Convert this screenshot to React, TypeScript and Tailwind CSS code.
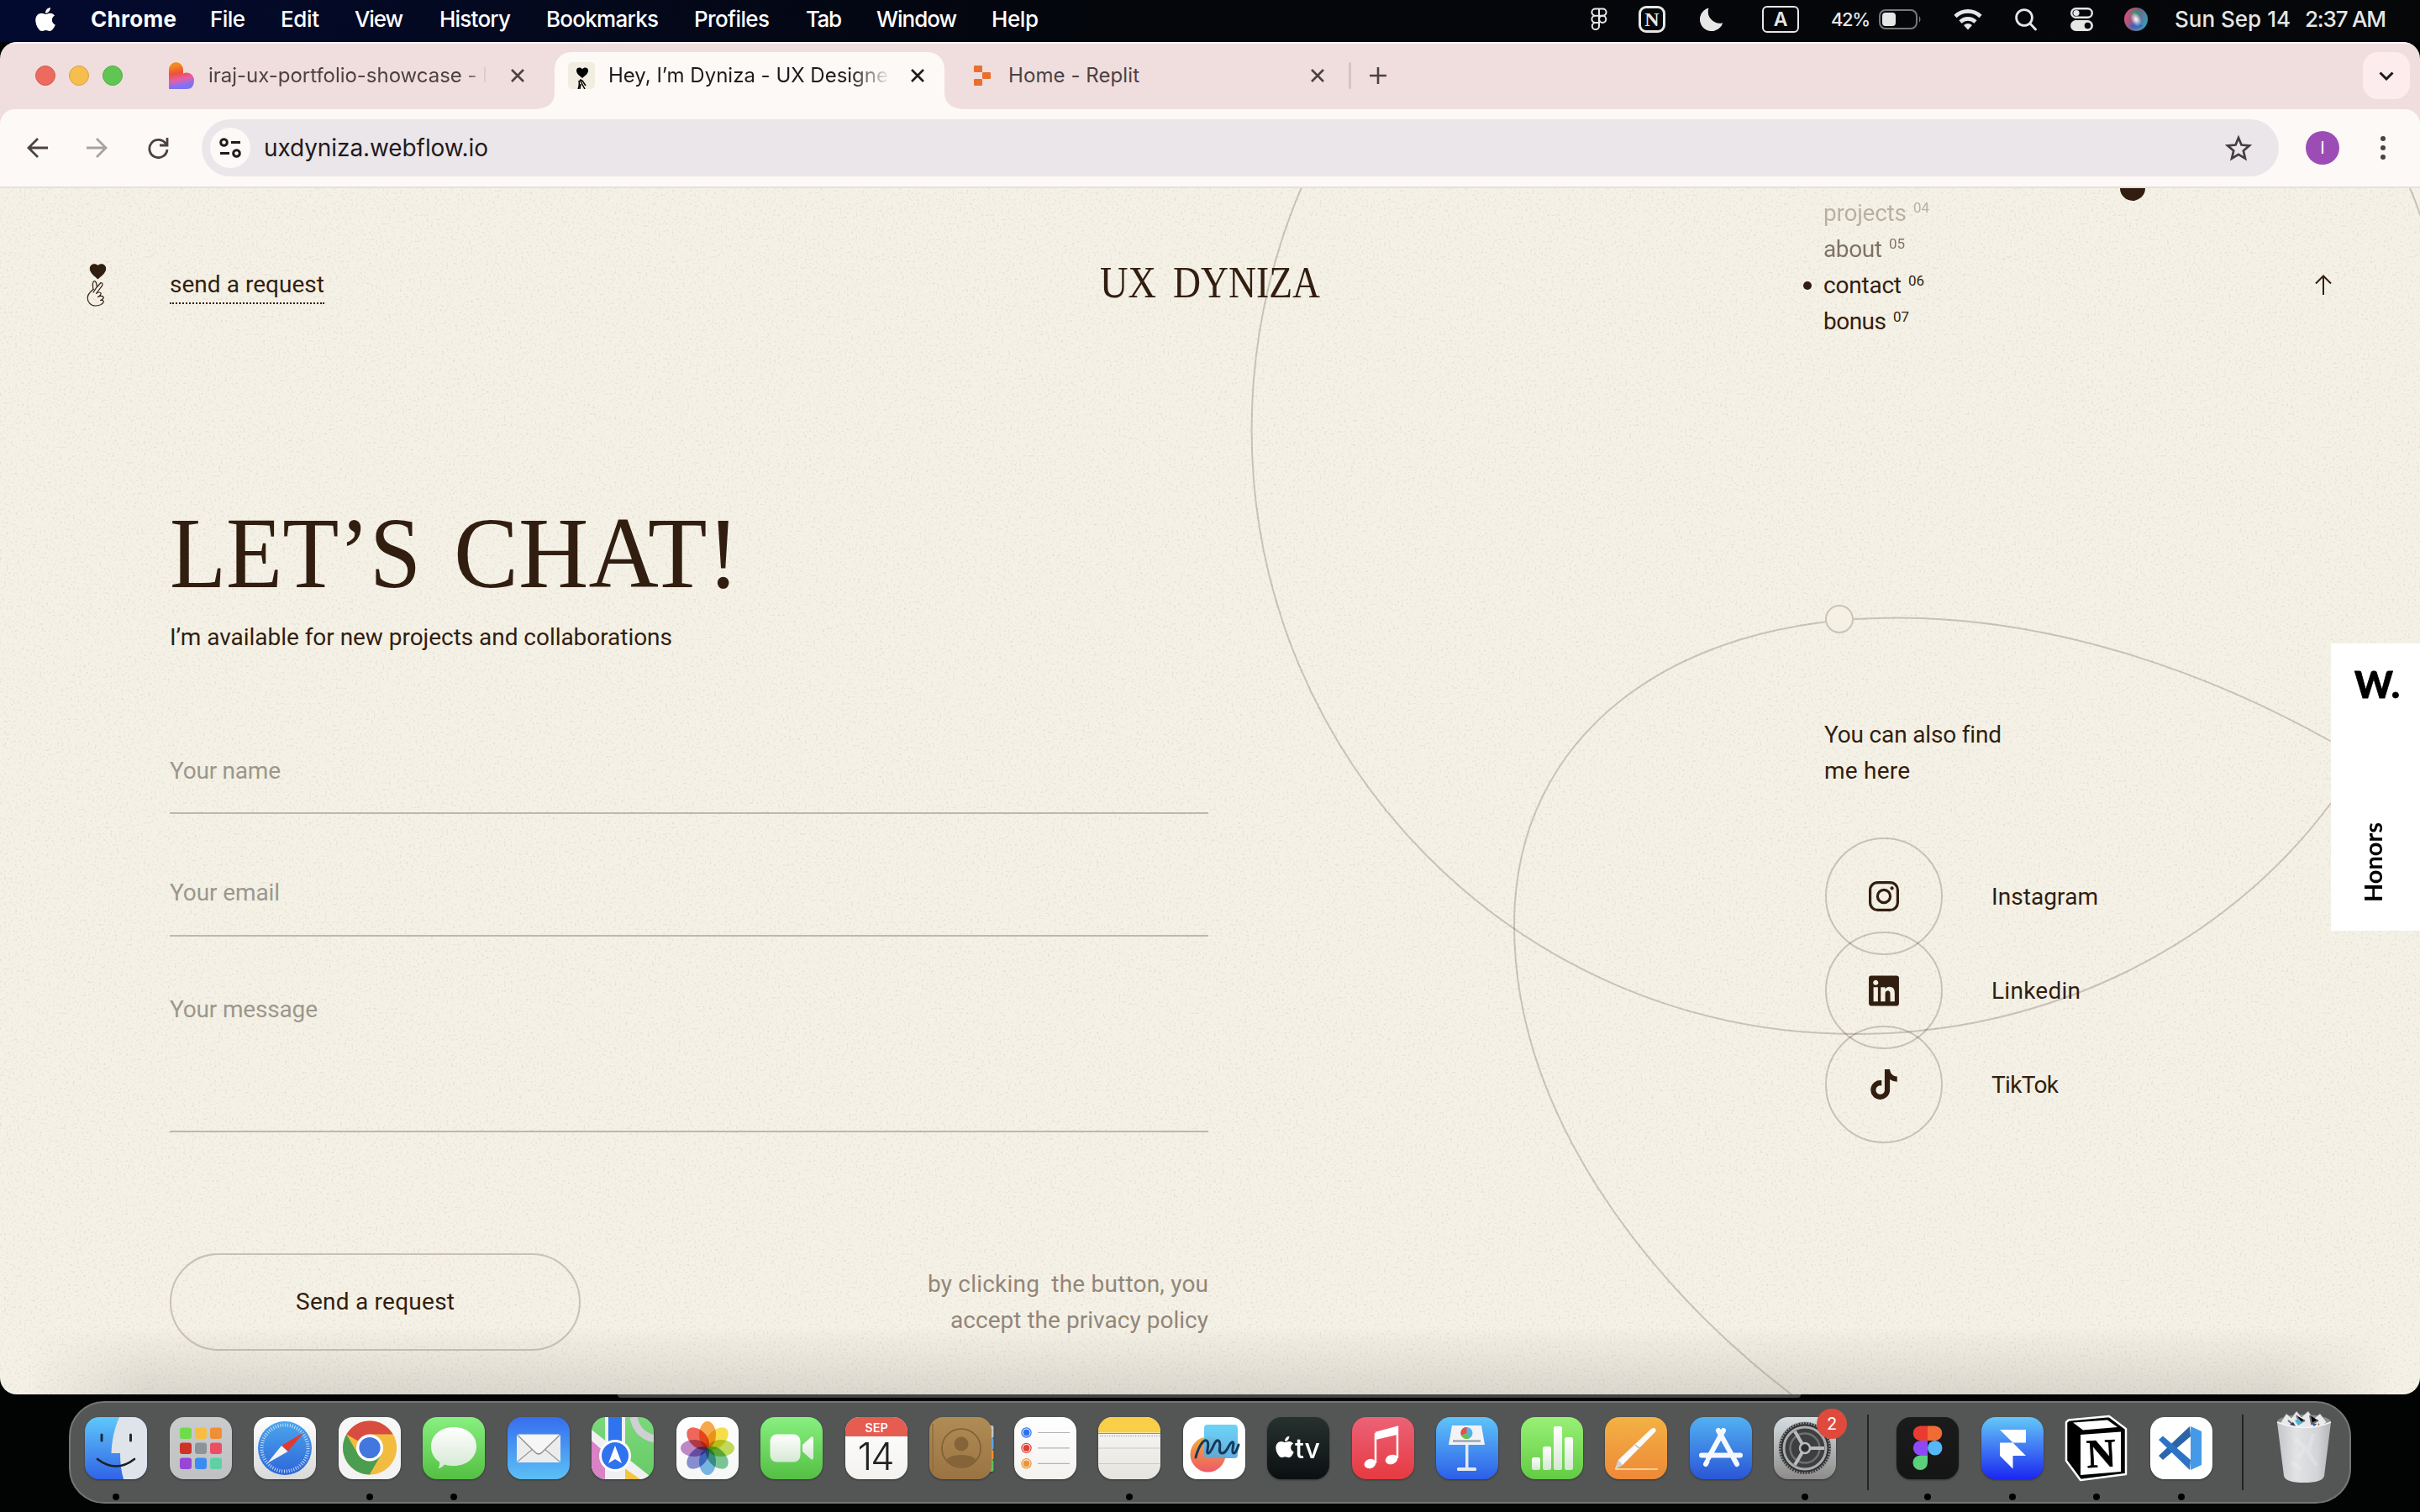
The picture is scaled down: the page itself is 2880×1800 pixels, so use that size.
import React, { useLayoutEffect, useRef, useState } from "react";
import { FaApple, FaLinkedin, FaTiktok } from "react-icons/fa";

type FitProps = { w: number; children: string; className?: string; squeeze?: boolean };

/** One line of text set to an exact measure, by tracking or by condensing. */
function Fit({ w, children, className = "", squeeze = false }: FitProps) {
  const ref = useRef<HTMLSpanElement>(null);
  const [natural, setNatural] = useState(0);
  useLayoutEffect(() => {
    if (ref.current) setNatural(ref.current.getBoundingClientRect().width);
  }, []);
  let style: React.CSSProperties = {};
  if (natural > 0) {
    style = squeeze
      ? { transform: `scaleX(${w / natural})` }
      : { letterSpacing: `${(w - natural) / Math.max(1, children.length - 1)}px` };
  }
  return (
    <span className={"block shrink-0 whitespace-pre " + className} style={{ width: w }}>
      <span ref={ref} className="inline-block origin-left whitespace-pre" style={style}>
        {children}
      </span>
    </span>
  );
}

/* ---------- Menu bar ---------- */

const menus = [
  { label: "File", w: 42, gap: "ml-[40px]" },
  { label: "Edit", w: 46, gap: "ml-[42px]" },
  { label: "View", w: 58, gap: "ml-[42px]" },
  { label: "History", w: 85, gap: "ml-[43px]" },
  { label: "Bookmarks", w: 134, gap: "ml-[42px]" },
  { label: "Profiles", w: 90, gap: "ml-[42px]" },
  { label: "Tab", w: 43, gap: "ml-[43px]" },
  { label: "Window", w: 96, gap: "ml-[41px]" },
  { label: "Help", w: 56, gap: "ml-[41px]" },
];

function MenuBar() {
  return (
    <div className="flex h-[50px] items-center bg-gradient-to-r from-[#030a30] via-[#04060c] via-45% to-[#050709] pb-[4px] text-[26px] leading-none font-medium text-white">
      <FaApple className="ml-[39px] h-[32px] w-[30px]" />
      <Fit w={102} className="ml-[39px] font-bold">Chrome</Fit>
      {menus.map((m) => (
        <Fit key={m.label} w={m.w} className={m.gap}>{m.label}</Fit>
      ))}
      <div className="ml-auto flex items-center text-[#e6e6e6]">
        <svg className="mr-[37px] h-[28px] w-[20px]" viewBox="0 0 20 28" fill="none" stroke="currentColor" strokeWidth="2">
          <path d="M10 1.5H5.5a4.1 4.1 0 0 0 0 8.2H10zM10 1.5h4.5a4.1 4.1 0 0 1 0 8.2H10zM10 9.700H5.500a4.100 4.100 0 0 0 0 8.200H10zM5.500 17.900a4.100 4.100 0 1 0 4.500 4.300V17.900z" />
          <circle cx="14.200" cy="13.800" r="4.100" />
        </svg>
        <div className="mr-[41px] flex h-[32px] w-[32px] items-center justify-center rounded-[9px] border-[3px] border-current font-['Liberation_Serif'] text-[24px] font-bold">N</div>
        <svg className="mr-[46px] h-[28px] w-[28px]" viewBox="0 0 28 28" fill="currentColor">
          <path d="M10.500 0.500A14 14 0 1 0 27.300 18.300A14 14 0 0 1 10.500 0.500z" />
        </svg>
        <div className="mr-[38px] flex h-[32px] w-[44px] items-center justify-center rounded-[6px] border-2 border-current text-[23px] font-semibold">A</div>
        <Fit w={47} className="mr-[10px] text-[22px]">42%</Fit>
        <svg className="mr-[38px] h-[24px] w-[51px]" viewBox="0 0 51 24" fill="none">
          <rect x="1" y="1" width="44" height="22" rx="7" stroke="#77787a" strokeWidth="2" />
          <rect x="4" y="4" width="16" height="16" rx="4" fill="#e6e6e6" />
          <path d="M48 8q3 4 0 8z" fill="#77787a" />
        </svg>
        <svg className="mr-[39px] h-[26px] w-[34px]" viewBox="0 0 34 26" fill="none" stroke="currentColor" strokeWidth="4.600">
          <path d="M2 9.500a21.500 21.500 0 0 1 30 0" />
          <path d="M8 16a13 13 0 0 1 18 0" />
          <path d="M17 25.500l-5-5.500a7.500 7.500 0 0 1 10 0z" fill="currentColor" stroke="none" />
        </svg>
        <svg className="mr-[40px] h-[27px] w-[26px]" viewBox="0 0 26 27" fill="none" stroke="currentColor" strokeWidth="2.800" strokeLinecap="round">
          <circle cx="11" cy="11" r="9.400" />
          <path d="M18 18l6.500 7" />
        </svg>
        <svg className="mr-[37px] h-[28px] w-[27px]" viewBox="0 0 27 28" fill="none">
          <rect x="1.200" y="1.200" width="24.600" height="10.600" rx="5.300" stroke="currentColor" strokeWidth="2.400" />
          <circle cx="7" cy="6.500" r="3.600" fill="currentColor" />
          <rect x="0" y="15" width="27" height="13" rx="6.500" fill="currentColor" />
          <circle cx="20.500" cy="21.500" r="3.800" fill="#07090b" />
        </svg>
        <svg className="mr-[32px] h-[28px] w-[28px]" viewBox="0 0 28 28">
          <defs>
            <linearGradient id="siri" x1="0" y1="0.300" x2="1" y2="0.700">
              <stop offset="0" stopColor="#e2506f" />
              <stop offset="0.450" stopColor="#7c5c8c" />
              <stop offset="1" stopColor="#2fa3b8" />
            </linearGradient>
            <radialGradient id="siriGlow">
              <stop offset="0" stopColor="#fff" />
              <stop offset="1" stopColor="#fff" stopOpacity="0" />
            </radialGradient>
          </defs>
          <circle cx="14" cy="14" r="14" fill="url(#siri)" />
          <path d="M6 6q8-6 16 0l-8 5z" fill="#3d8d6c" opacity="0.800" />
          <path d="M6 22q8 6 16 0l-7-6z" fill="#3567c8" opacity="0.900" />
          <ellipse cx="14" cy="14" rx="6" ry="9" fill="url(#siriGlow)" transform="rotate(-25 14 14)" />
        </svg>
        <Fit w={138} className="mr-[17px]">Sun Sep 14</Fit>
        <Fit w={97} className="mr-[40px]">2:37 AM</Fit>
      </div>
    </div>
  );
}

/* ---------- Browser chrome ---------- */

function Close({ className = "" }: { className?: string }) {
  return (
    <svg className={"h-[16px] w-[16px] shrink-0 " + className} viewBox="0 0 16 16" fill="none" stroke="currentColor" strokeWidth="2.600">
      <path d="M1 1l14 14M15 1L1 15" />
    </svg>
  );
}

function HandHeart({ className = "" }: { className?: string }) {
  return (
    <svg className={className} viewBox="0 0 24 52" fill="none" stroke="#321e10" strokeWidth="1.200" strokeLinecap="round" strokeLinejoin="round">
      <path d="M13.500 19.500C10 16 3.800 12.500 3.800 6.500C3.800 1.500 10 -0.500 13.500 2.800C17 -0.500 23.200 1.500 23.200 6.500C23.200 12.500 17 16 13.500 19.500z" fill="#321e10" stroke="none" />
      <path d="M8 31.500C7.200 27 7 23 8.800 21.800C11 21.200 11.800 24 12.200 27.500" />
      <path d="M8 35C10.500 30.500 14 26.500 17 23.500C19.500 23.500 19.500 26 18 27.800L11.500 36.500C14 34.500 16.500 34.500 17.300 36.500C17 38.500 15.500 39.500 13.500 40.500C16.500 39 19.500 39 20.300 41.200C20 43 18.500 44 16.500 44.500C18.500 44 20.300 44.500 20.300 46.500C18.500 49.800 14.500 51 10.500 51C4.500 51 1.200 46.500 1.200 41.500C1.200 37 4.500 34.500 8 31.500" />
    </svg>
  );
}

function TabStrip() {
  return (
    <div className="flex h-[80px] border-t-2 border-[#faf3f3] bg-[#f0dede] text-[24px] leading-none text-[#4c4143]">
      <div className="flex w-[634px] items-center pb-[2px] pl-[42px]">
        <div className="flex gap-4">
          <div className="h-6 w-6 rounded-full border border-[#d8574c] bg-[#ed6a5f]" />
          <div className="h-6 w-6 rounded-full border border-[#dca23a] bg-[#f5bf4f]" />
          <div className="h-6 w-6 rounded-full border border-[#50ae3f] bg-[#61c554]" />
        </div>
        <svg className="ml-[55px] h-[32px] w-[30px]" viewBox="0 0 30 32">
          <defs>
            <linearGradient id="lov" x1="0.300" y1="0" x2="0.500" y2="1">
              <stop offset="0.100" stopColor="#f28b1e" />
              <stop offset="0.400" stopColor="#f0503c" />
              <stop offset="0.650" stopColor="#e25fae" />
              <stop offset="0.900" stopColor="#7a73f5" />
            </linearGradient>
          </defs>
          <path d="M0 9a8.500 9 0 0 1 17 0v4.500a9 9 0 0 1 13 8.500q0 10-9 10H0z" fill="url(#lov)" />
        </svg>
        <div className="ml-[17px] w-[332px] overflow-hidden py-2 [mask-image:linear-gradient(90deg,#000_92%,transparent_100%)]">
          <Fit w={332}>iraj-ux-portfolio-showcase - l</Fit>
        </div>
        <Close className="ml-[28px]" />
      </div>
      <div className="flex items-end">
        <svg className="h-[20px] w-[26px]" viewBox="0 0 26 20"><path d="M0 20Q26 20 26 0V20z" fill="#fdf9f6" /></svg>
      </div>
      <div className="mt-[10px] flex w-[464px] items-center rounded-t-[20px] bg-[#fdf9f6] pb-[12px] text-[#1f1a1c]">
        <div className="ml-[16px] flex h-[32px] w-[32px] justify-center rounded-[5px] bg-[#f1ede0] pt-[6px]">
          <svg className="h-[26px] w-[20px]" viewBox="0 0 20 26">
            <path d="M11 13C6 9 4 7 4 4c0-4 5-4.500 7-1.500C13-.5 18 0 18 4c0 3-2 5-7 9z" fill="#000" />
            <path d="M6 26q2-4 1-10M8 15l6 11M9 20l-1 6M8 15q3 0 5 4l2 3" fill="none" stroke="#000" strokeWidth="1.500" />
          </svg>
        </div>
        <div className="ml-[16px] w-[336px] overflow-hidden py-2 [mask-image:linear-gradient(90deg,#000_86%,transparent_100%)]">
          <Fit w={333}>Hey, I’m Dyniza - UX Designe</Fit>
        </div>
        <Close className="ml-[24px]" />
      </div>
      <div className="flex items-end">
        <svg className="h-[20px] w-[26px]" viewBox="0 0 26 20"><path d="M26 20Q0 20 0 0V20z" fill="#fdf9f6" /></svg>
      </div>
      <div className="flex flex-1 items-center pb-[2px]">
        <svg className="ml-[9px] h-[24px] w-[20px]" viewBox="0 0 20 24" fill="#e8702f">
          <rect x="0" y="0" width="10" height="8" rx="1" />
          <rect x="10" y="8" width="10" height="8" rx="1" />
          <rect x="0" y="16" width="10" height="8" rx="1" />
        </svg>
        <Fit w={156} className="ml-[21px]">Home - Replit</Fit>
        <Close className="ml-[204px]" />
        <div className="ml-[29px] h-[32px] w-[3px] rounded bg-[#d8c3c5]" />
        <svg className="ml-[22px] h-[20px] w-[20px]" viewBox="0 0 20 20" stroke="currentColor" strokeWidth="2.600"><path d="M10 0v20M0 10h20" /></svg>
        <div className="mr-[12px] ml-auto flex h-[56px] w-[56px] items-center justify-center rounded-[18px] bg-[#fcecee]">
          <svg className="h-[11px] w-[18px]" viewBox="0 0 18 11" fill="none" stroke="#1f1a1c" strokeWidth="3"><path d="M1.500 1.500L9 9l7.500-7.500" /></svg>
        </div>
      </div>
    </div>
  );
}

function Toolbar() {
  return (
    <div className="bg-[#f0dede]">
      <div className="flex h-[94px] items-center rounded-t-[18px] border-b-2 border-[#e4e0e3] bg-[#fdf9f6] text-[#4c4143]">
        <svg className="ml-[32px] h-[24px] w-[25px]" viewBox="0 0 25 24" fill="none" stroke="currentColor" strokeWidth="2.800"><path d="M25 12H2M13 1L2 12l11 11" /></svg>
        <svg className="ml-[46px] h-[24px] w-[25px] text-[#aaa1a1]" viewBox="0 0 25 24" fill="none" stroke="currentColor" strokeWidth="2.800"><path d="M0 12h23M12 1l11 11-11 11" /></svg>
        <svg className="ml-[47px] h-[26px] w-[26px]" viewBox="0 0 26 26" fill="none" stroke="currentColor" strokeWidth="2.800"><path d="M22.500 8.500A10.600 10.600 0 1 0 24 15M24 1v9h-9" /></svg>
        <div className="ml-[39px] flex h-[68px] w-[2472px] items-center rounded-full bg-[#ebe6ea] text-[#1f1a1c]">
          <div className="ml-[10px] flex h-[48px] w-[48px] items-center justify-center rounded-full bg-[#fdf9f6]">
            <svg className="h-[24px] w-[26px]" viewBox="0 0 26 24" fill="none" stroke="currentColor" strokeWidth="3">
              <circle cx="5.500" cy="5.500" r="3.800" /><path d="M14 5.500h11M1 18.500h11" /><circle cx="20.500" cy="18.500" r="3.800" />
            </svg>
          </div>
          <Fit w={267} className="ml-[16px] text-[28px] leading-none">uxdyniza.webflow.io</Fit>
          <svg className="mr-[32px] ml-auto h-[32px] w-[32px] text-[#453d40]" viewBox="0 0 32 32" fill="none" stroke="currentColor" strokeWidth="2.700"><path d="M16 4l3.500 8.500 9.500.8-7.200 6.200 2.200 9.200L16 23.800l-8 4.900 2.200-9.200L3 13.300l9.500-.8z" /></svg>
        </div>
        <div className="ml-[32px] flex h-[40px] w-[40px] items-center justify-center rounded-full bg-[#9b4db5] text-[20px] leading-none text-white">I</div>
        <div className="ml-[49px] flex flex-col gap-[5px]">
          <div className="h-[6px] w-[6px] rounded-full bg-[#4c4143]" />
          <div className="h-[6px] w-[6px] rounded-full bg-[#4c4143]" />
          <div className="h-[6px] w-[6px] rounded-full bg-[#4c4143]" />
        </div>
      </div>
    </div>
  );
}

/* ---------- Page ---------- */

const nav = [
  { label: "projects", num: "04", w: 99, tone: "opacity-30" },
  { label: "about", num: "05", w: 70, tone: "opacity-60" },
  { label: "contact", num: "06", w: 93, tone: "" },
  { label: "bonus", num: "07", w: 75, tone: "" },
];

function Backdrop() {
  return (
    <svg className="absolute inset-0 h-[1436px] w-[2880px]" viewBox="0 224 2880 1436" fill="none">
      <filter id="grain" x="0" y="0" width="100%" height="100%" colorInterpolationFilters="sRGB">
        <feTurbulence type="fractalNoise" baseFrequency="0.380" numOctaves="2" seed="4" />
        <feColorMatrix values="0 0 0 0 0.840  0 0 0 0 0.850  0 0 0 0 0.790  2.200 0 0 0 -1.180" />
      </filter>
      <rect x="0" y="224" width="2880" height="1436" filter="url(#grain)" />
      <g stroke="#321e10" strokeOpacity="0.220" strokeWidth="2">
        <path d="M1548.500 224C1510 315 1489.600 410 1489.600 511.500C1489.600 909.700 1811 1231 2207 1231C2440 1231 2650 1124 2774 956" />
        <path d="M2868 224Q2875 240 2881 258" />
        <path d="M2774 882.500C2600 785 2420 735.500 2257 735.500C1990 735.500 1802 875 1802 1101C1802 1325 1960 1530 2137 1664" />
        <circle cx="2189" cy="737" r="16" fill="#f4f0e4" stroke="#cac3b8" strokeOpacity="1" />
      </g>
      <circle cx="2538" cy="224" r="15" fill="#321e10" />
    </svg>
  );
}

function SiteHeader() {
  return (
    <header className="flex h-[230px] items-center">
      <HandHeart className="ml-[103px] h-[52px] w-[24px]" />
      <div className="ml-[75px] border-b-2 border-dotted border-[#321e10] pt-[9px] pb-[8px]">
        <Fit w={184} className="leading-[26px]">send a request</Fit>
      </div>
      <div className="ml-[923px] flex pb-[5px] font-['Liberation_Serif'] text-[53px] leading-none">
        <Fit w={67} squeeze>UX</Fit>
        <Fit w={175} squeeze className="ml-[20px]">DYNIZA</Fit>
      </div>
      <nav className="-mt-[41px] ml-[575px] flex w-[200px] flex-col">
        {nav.map((n) => (
          <div key={n.label} className={"flex h-[43.2px] items-center " + n.tone}>
            <div className={"mr-[14px] h-[10px] w-[10px] rounded-full " + (n.label === "contact" ? "bg-[#321e10]" : "")} />
            <Fit w={n.w} className="leading-none">{n.label}</Fit>
            <Fit w={19} className="mb-[12px] ml-[8px] text-[17px] leading-none">{n.num}</Fit>
          </div>
        ))}
      </nav>
      <svg className="ml-[409px] h-[24px] w-[20px]" viewBox="0 0 20 24" fill="none" stroke="#321e10" strokeWidth="2"><path d="M10 24V2M1 10.500L10 1.500l9 9" /></svg>
    </header>
  );
}

function ContactForm() {
  return (
    <section className="flex w-[1236px] flex-col">
      <h1 className="mt-[145px] flex h-[119px] font-['Liberation_Serif'] text-[120px] leading-[119px]">
        <Fit w={299} squeeze>LET’S</Fit>
        <Fit w={340} squeeze className="ml-[39px]">CHAT!</Fit>
      </h1>
      <Fit w={598} className="mt-[27px] leading-[28px]">I’m available for new projects and collaborations</Fit>
      <div className="mt-[96px] flex h-[100px] items-center border-b-2 border-[#bdb8ae] text-[#9c978c]">
        <Fit w={132}>Your name</Fit>
      </div>
      <div className="mt-[44px] flex h-[102px] items-center border-b-2 border-[#bdb8ae] text-[#9c978c]">
        <Fit w={131}>Your email</Fit>
      </div>
      <div className="flex h-[233px] border-b-2 border-[#bdb8ae] pt-[73px] text-[#9c978c]">
        <Fit w={176}>Your message</Fit>
      </div>
      <div className="mt-[144px] flex items-center justify-between">
        <div className="flex h-[116px] w-[489px] items-center justify-center rounded-full border-2 border-[#cac1b6]">
          <Fit w={189}>Send a request</Fit>
        </div>
        <div className="flex flex-col items-end leading-[43px] text-[#92867b]">
          <Fit w={334}>by clicking  the button, you</Fit>
          <Fit w={307}>accept the privacy policy</Fit>
        </div>
      </div>
    </section>
  );
}

function SocialRow({ label, w, children }: { label: string; w: number; children: React.ReactNode }) {
  return (
    <div className="-mb-[28px] flex items-center">
      <div className="flex h-[140px] w-[140px] items-center justify-center rounded-full border-2 border-[#321e10]/22">{children}</div>
      <Fit w={w} className="ml-[58px] pt-[2px] leading-none">{label}</Fit>
    </div>
  );
}

function FindMe() {
  return (
    <section className="ml-[733px] flex w-[420px] flex-col pt-[399px]">
      <Fit w={210} className="leading-[43px]">You can also find</Fit>
      <Fit w={102} className="leading-[43px]">me here</Fit>
      <div className="mt-[58px] ml-[1px] flex flex-col">
        <SocialRow label="Instagram" w={127}>
          <svg className="h-[36px] w-[36px]" viewBox="0 0 36 36" fill="none" stroke="#321e10" strokeWidth="3.200">
            <rect x="1.600" y="1.600" width="32.800" height="32.800" rx="9" />
            <circle cx="18" cy="18" r="7.600" />
            <circle cx="27.600" cy="8.400" r="2.100" fill="#321e10" stroke="none" />
          </svg>
        </SocialRow>
        <SocialRow label="Linkedin" w={106}><FaLinkedin className="h-[41px] w-[36px]" /></SocialRow>
        <SocialRow label="TikTok" w={80}><FaTiktok className="h-[36px] w-[32px]" /></SocialRow>
      </div>
    </section>
  );
}

function Honors() {
  return (
    <aside className="absolute top-[542px] right-0 flex h-[342px] w-[106px] flex-col items-center justify-between bg-white pt-[25px] pb-[34px] text-black">
      <Fit w={54} squeeze className="ml-1 font-[Lato] text-[43px] leading-[48px] font-black [-webkit-text-stroke:0.8px_#000]">W.</Fit>
      <span className="mr-[7px] rotate-180 font-[Lato] text-[29px] leading-[32px] font-bold [writing-mode:vertical-rl]">Honors</span>
    </aside>
  );
}

function Site() {
  return (
    <main className="relative h-[1436px] overflow-hidden bg-[#f5f1e6] font-[Roboto] text-[28px] leading-none text-[#321e10]">
      <Backdrop />
      <div className="relative">
        <SiteHeader />
        <div className="flex pl-[202px]">
          <ContactForm />
          <FindMe />
        </div>
      </div>
      <Honors />
      <div className="absolute bottom-0 left-0 h-[80px] w-full bg-gradient-to-b from-transparent to-[#8c8884]/25 [mask-image:linear-gradient(90deg,transparent_1%,#000_6%,#000_94%,transparent_99%)]" />
    </main>
  );
}

/* ---------- Dock ---------- */

function G({ id, a, b }: { id: string; a: string; b: string }) {
  return (
    <linearGradient id={id} x1="0" y1="0" x2="0" y2="1">
      <stop offset="0" stopColor={a} />
      <stop offset="1" stopColor={b} />
    </linearGradient>
  );
}

function Tile({ id, a, b, children }: { id: string; a: string; b: string; children?: React.ReactNode }) {
  return (
    <svg className="h-[74px] w-[74px] overflow-visible drop-shadow-[0_1px_1px_rgba(0,0,0,0.4)]" viewBox="0 0 74 74">
      <defs>
        <G id={id} a={a} b={b} />
        <clipPath id={id + "c"}><rect width="74" height="74" rx="17" /></clipPath>
        <G id={id + "w"} a="#ffffff" b="#d5e8d3" />
      </defs>
      <rect width="74" height="74" rx="17" fill={`url(#${id})`} />
      <g clipPath={`url(#${id}c)`}>{children}</g>
    </svg>
  );
}

const pads = ["#6fdc4c", "#f7bd3f", "#ee8f35", "#cf3226", "#8d9499", "#ee4e63", "#9646d8", "#3b8cf2", "#5fcfa6"];
const petals = ["#f5a13c", "#f5dc3a", "#bcd64a", "#6cc08a", "#6aaee0", "#7d84cc", "#b77fc0", "#ee5a4c"];
const degs = [0, 45, 90, 135, 180, 225, 270, 315];

const dockApps: { name: string; open?: boolean; badge?: string; art: React.ReactNode }[] = [
  { name: "Finder", open: true, art: (
    <Tile id="finder" a="#5ec8fa" b="#3163e6">
      <path d="M41 0C35 14 32 28 31.500 43H42C42 54 43 64 46 74H74V0z" fill="#dfe3ea" />
      <path d="M20 21v7M54.500 21v7" stroke="#1c2a3a" strokeWidth="3" strokeLinecap="round" />
      <path d="M15 50Q37 67 59 50" fill="none" stroke="#1c2028" strokeWidth="2.600" strokeLinecap="round" />
    </Tile>) },
  { name: "Launchpad", art: (
    <Tile id="launch" a="#cacbcc" b="#bfc1c3">
      {pads.map((c, i) => <rect key={c} x={12 + (i % 3) * 18} y={12.500 + Math.floor(i / 3) * 18} width="14" height="13.500" rx="3" fill={c} />)}
    </Tile>) },
  { name: "Safari", art: (
    <Tile id="safari" a="#ffffff" b="#d9d9d9">
      <defs><G id="safariB" a="#4aa6ee" b="#2e66d8" /></defs>
      <circle cx="37" cy="37" r="32" fill="url(#safariB)" />
      <circle cx="37" cy="37" r="27.500" fill="none" stroke="#d6e8fa" strokeWidth="4" strokeDasharray="0.900 1.980" />
      <path d="M60 18L40.500 41L33 34z" fill="#e3382f" />
      <path d="M16 55L33 34L40.500 41z" fill="#f4f4f4" />
    </Tile>) },
  { name: "Chrome", open: true, art: (
    <Tile id="chrome" a="#f7f7f7" b="#f2f2f2">
      <circle cx="37" cy="36.500" r="32" fill="#f2bc41" />
      <path d="M37 36.500L9.300 20.500A32 32 0 0 1 64.700 20.500z" fill="#d84d3f" />
      <path d="M9.300 20.500A32 32 0 0 0 37 68.500L52 43L37 50.500L23 44z" fill="#4b9e4f" />
      <path d="M37 20.500H64.700A32 32 0 0 1 37 68.500L51 44z" fill="#f2bc41" />
      <circle cx="37" cy="36.500" r="16" fill="#fff" />
      <circle cx="37" cy="36.500" r="12.600" fill="#4277de" />
    </Tile>) },
  { name: "Messages", open: true, art: (
    <Tile id="msg" a="#87f080" b="#54bf43">
      <path d="M37 12C53 12 64 22 64 35S53 58 37 58C33 58 29 57.500 26 56.500C24 59 21 61 18.500 61C20 58.500 20.500 56 20 53.500C13.500 49.500 10 42.500 10 35C10 22 21 12 37 12z" fill="url(#msgw)" />
    </Tile>) },
  { name: "Mail", art: (
    <Tile id="mail" a="#376eee" b="#5cc0f7">
      <rect x="11" y="20.500" width="52" height="33.500" rx="2.500" fill="#ececec" />
      <path d="M12 53L30 38M62 53L44 38" stroke="#9a9a9a" strokeWidth="1.200" />
      <path d="M12 21.500L33 42Q37 46 41 42L62 21.500" fill="#f6f6f6" stroke="#8e8e8e" strokeWidth="1.300" />
    </Tile>) },
  { name: "Maps", art: (
    <Tile id="maps" a="#7bd77b" b="#67cb66">
      <path d="M0 15L74 74H0z" fill="#f0f0f3" />
      <path d="M0 28L18 44V74H0z" fill="#d982c5" />
      <path d="M38 60L58 74H38z" fill="#f2c73e" />
      <path d="M50 0Q54 22 76 26" fill="none" stroke="#cfcfd4" strokeWidth="9" />
      <rect x="16" width="24" height="74" fill="#f0f0f3" />
      <rect x="20" width="16" height="42" fill="#2f73ee" />
      <circle cx="28" cy="46" r="19" fill="#fff" />
      <circle cx="28" cy="46" r="16" fill="#2f73ee" />
      <path d="M28 34L36 55L28 50L20 55z" fill="#fff" />
    </Tile>) },
  { name: "Photos", art: (
    <Tile id="photos" a="#ffffff" b="#f6f6f6">
      {degs.map((d, i) => <ellipse key={d} cx="37" cy="21" rx="10" ry="16" fill={petals[i]} opacity="0.920" className="mix-blend-multiply" transform={`rotate(${d} 37 37)`} />)}
    </Tile>) },
  { name: "FaceTime", art: (
    <Tile id="face" a="#87f080" b="#54bf43">
      <rect x="11.500" y="20.500" width="36" height="33" rx="8" fill="url(#facew)" />
      <path d="M50 33L60 24Q63 22 63 26V48Q63 52 60 50L50 41z" fill="url(#facew)" />
    </Tile>) },
  { name: "Calendar", art: (
    <Tile id="cal" a="#ffffff" b="#f3f2ef">
      <rect width="74" height="23" fill="#e55d50" />
      <text x="37" y="17.500" textAnchor="middle" fontSize="14.500" fontWeight="600" fill="#fff" fontFamily="Inter, sans-serif">SEP</text>
      <text x="35.500" y="62.500" textAnchor="middle" fontSize="45" fontWeight="300" letterSpacing="-2" fill="#222" fontFamily="Inter, sans-serif">14</text>
    </Tile>) },
  { name: "Contacts", art: (
    <svg className="h-[74px] w-[74px] overflow-visible drop-shadow-[0_1px_1px_rgba(0,0,0,0.4)]" viewBox="0 0 74 74">
      <defs><G id="cont" a="#b08c55" b="#9a7343" /></defs>
      <rect x="66" y="10" width="10.500" height="15" rx="2" fill="#c4c4c4" /><rect x="66" y="25" width="10.500" height="14" rx="2" fill="#5aa7e8" /><rect x="66" y="39" width="10.500" height="12" rx="2" fill="#ef8f2e" /><rect x="66" y="51" width="10.500" height="14" rx="2" fill="#5bc25b" />
      <rect width="74" height="74" rx="16" fill="url(#cont)" />
      <path d="M4 8V66" stroke="#8f6c3d" strokeWidth="1.500" />
      <circle cx="38" cy="37" r="23" fill="none" stroke="#7f5f33" strokeWidth="1.600" />
      <circle cx="38" cy="32" r="8.500" fill="#856439" />
      <path d="M20 51Q25 45 38 45T56 51Q49 60 38 60T20 51z" fill="#856439" />
    </svg>) },
  { name: "Reminders", art: (
    <Tile id="rem" a="#ffffff" b="#f3f2ef">
      {["#2f72ee", "#e03f35", "#ee9334"].map((c, i) => (
        <g key={c}>
          <circle cx="14.500" cy={18.500 + i * 18.400} r="5.600" fill="none" stroke={c} strokeWidth="1.200" />
          <circle cx="14.500" cy={18.500 + i * 18.400} r="3.900" fill={c} />
          <path d={`M28 ${18.500 + i * 18.400}H66`} stroke="#b4b4b8" strokeWidth="1.200" />
        </g>
      ))}
    </Tile>) },
  { name: "Notes", open: true, art: (
    <Tile id="notes" a="#f9f9f9" b="#e6e4de">
      <rect width="74" height="18.500" fill="#f8cf46" />
      <path d="M0 19.500H74" stroke="#97907c" strokeWidth="1.200" />
      <path d="M2 22.500H74" stroke="#aaa" strokeWidth="1.500" strokeDasharray="1.200 1.600" />
      <path d="M0 37H74M0 55.500H74" stroke="#cbcac8" strokeWidth="1.200" />
    </Tile>) },
  { name: "Freeform", art: (
    <Tile id="free" a="#ffffff" b="#ffffff">
      <defs><G id="freeA" a="#f2ad38" b="#ee5a66" /><G id="freeB" a="#5fd0f5" b="#5aa9e0" /></defs>
      <circle cx="29.500" cy="44.500" r="21" fill="url(#freeA)" />
      <rect x="25" y="9" width="40" height="40" rx="4" fill="url(#freeB)" opacity="0.930" />
      <path d="M15 48C18 36 24 26 28 28C33 31 26 43 30 43C35 42 37 26 42 28C47 31 40 42 46 43C52 44 54 32 58 30C63 28 56 42 60 43C63 43 64 39 66 33" fill="none" stroke="#143a5e" strokeWidth="3" strokeLinecap="round" />
    </Tile>) },
  { name: "TV", art: (
    <Tile id="tv" a="#27322f" b="#0b0f11">
      <g transform="translate(6.500 21)"><FaApple size={29} color="#fff" /></g>
      <text x="33" y="48.500" fontSize="32" fontWeight="500" fill="#fff" textLength="30" lengthAdjust="spacingAndGlyphs" fontFamily="Inter, sans-serif">tv</text>
    </Tile>) },
  { name: "Music", art: (
    <Tile id="music" a="#ec6277" b="#e63a41">
      <path d="M28 19L54 12V49M28 19V55M28 25L54 18.500" fill="none" stroke="#fff" strokeWidth="2.500" />
      <path d="M28 18L54 12V21L28 27z" fill="#fff" />
      <ellipse cx="21.500" cy="55.500" rx="7" ry="5.500" fill="#fff" transform="rotate(-20 21.500 55.500)" />
      <ellipse cx="47" cy="50.500" rx="7.500" ry="5.500" fill="#fff" transform="rotate(-20 47 50.500)" />
    </Tile>) },
  { name: "Keynote", art: (
    <Tile id="key" a="#5fc4f9" b="#2c5fe8">
      <path d="M19 10H54L58 33H15z" fill="#f1f3f6" />
      <path d="M20 28.500H53" stroke="#9ba7b6" strokeWidth="2.500" />
      <rect x="35" y="33" width="3.500" height="29" fill="#e4e8ee" />
      <rect x="25" y="60" width="23" height="4" rx="1.500" fill="#e4e8ee" />
      <circle cx="36.500" cy="19" r="7" fill="#4fb5e8" />
      <path d="M36.500 19V12A7 7 0 0 0 30 22z" fill="#e94f4a" /><path d="M36.500 19L30 22A7 7 0 0 0 40 25z" fill="#6cc24a" />
    </Tile>) },
  { name: "Numbers", art: (
    <Tile id="num" a="#98f076" b="#63cb43">
      <rect x="13" y="48" width="10" height="15" rx="2.500" fill="url(#numw)" /><rect x="26" y="35" width="10" height="28" rx="2.500" fill="url(#numw)" />
      <rect x="39" y="11" width="10" height="52" rx="2.500" fill="url(#numw)" /><rect x="52" y="24" width="10" height="39" rx="2.500" fill="url(#numw)" />
    </Tile>) },
  { name: "Pages", art: (
    <Tile id="pages" a="#f3b243" b="#ee8838">
      <path d="M13 62H62" stroke="#f9cf95" strokeWidth="2.200" strokeLinecap="round" />
      <path d="M12 62L16 51L55 14Q61 11 60.500 17L21 57z" fill="#fafafa" />
      <path d="M12 62L16 51L21 57z" fill="#d0d0d0" /><path d="M36 33L42 38" stroke="#b8b8b8" strokeWidth="1.500" />
    </Tile>) },
  { name: "App Store", art: (
    <Tile id="store" a="#52b1f2" b="#2a56d6">
      <g stroke="#f4f8fd" strokeWidth="6" strokeLinecap="round"><path d="M34 16L56 56M40 16L22 49M19 56L20.500 53" /><path d="M14 45.500H60" /></g>
    </Tile>) },
  { name: "Settings", open: true, badge: "2", art: (
    <Tile id="set" a="#d5dde2" b="#8e8c8a">
      <circle cx="37" cy="37" r="31" fill="#303234" /><circle cx="37" cy="37" r="30" fill="none" stroke="#8f9193" strokeWidth="3" strokeDasharray="1.700 1.600" />
      <circle cx="37" cy="37" r="25" fill="#3d3f40" stroke="#a9abad" strokeWidth="3" />
      <circle cx="37" cy="37" r="17.500" fill="none" stroke="#6d6f70" strokeWidth="2.500" />
      <g stroke="#b9bbbd" strokeWidth="4"><path d="M41 37H60M35 34L25 17M35 40L25 57" /></g>
      <circle cx="37" cy="37" r="6" fill="#2c2e2f" stroke="#b9bbbd" strokeWidth="2.500" />
    </Tile>) },
];

const dockPinned: { name: string; art: React.ReactNode }[] = [
  { name: "Figma", art: (
    <Tile id="figma" a="#1b1b1b" b="#151515">
      <path d="M37 10.500V28H28.500a8.750 8.750 0 0 1 0-17.500z" fill="#ea3b30" /><path d="M37 10.500h8.500a8.750 8.750 0 0 1 0 17.500H37z" fill="#ef6c35" />
      <path d="M37 28v17.500H28.500a8.750 8.750 0 0 1 0-17.500z" fill="#8d49f5" /><circle cx="45.750" cy="36.750" r="8.750" fill="#56b7f8" />
      <path d="M37 45.500v8.750a8.750 8.750 0 1 1-8.750-8.750z" fill="#5bcf7a" />
    </Tile>) },
  { name: "Framer", art: (
    <Tile id="framer" a="#63c8f8" b="#1b27f0">
      <path d="M22 15H53V30.500H37.500zM22 30.500H37.500L53 46H37.500V61.500L22 46z" fill="#fff" />
    </Tile>) },
  { name: "Notion", art: (
    <svg className="h-[74px] w-[74px] overflow-visible" viewBox="0 0 74 74">
      <path d="M4 3.500L52-1L72 14V68L18 75L1 52V6z" fill="#000" stroke="#fff" strokeWidth="2.500" strokeLinejoin="round" />
      <path d="M9 6.500L50 3.500L62 12L21 15.500z" fill="#fff" />
      <path d="M18 21L66 17.500V65L18 69z" fill="#fff" />
      <text x="42.500" y="59.500" textAnchor="middle" fontSize="48" fontWeight="700" fill="#000" stroke="#000" strokeWidth="0.800" fontFamily="'Liberation Serif', serif" transform="rotate(-3 42 43)">N</text>
    </svg>) },
  { name: "Code", art: (
    <Tile id="code" a="#ffffff" b="#ffffff">
      <path d="M47 11L48 23L15 51L10 46Z" fill="#2c65a8" />
      <path d="M10 27L15 22.500L48 51L47 63z" fill="#2f74c4" />
      <path d="M48 11L61 17V57L48 63z" fill="#459ae8" />
    </Tile>) },
];

function DockItem({ open, badge, children }: { open?: boolean; badge?: string; children: React.ReactNode }) {
  return (
    <div className="relative flex w-[100.5px] shrink-0 flex-col items-center pt-[17px]">
      {children}
      {open && <div className="mt-[17px] h-[8px] w-[8px] rounded-full bg-black" />}
      {badge && (
        <div className="absolute top-[7px] left-[64px] flex h-[36px] w-[36px] items-center justify-center rounded-full bg-[#e04a3c] text-[20px] leading-none text-white">{badge}</div>
      )}
    </div>
  );
}

function Trash() {
  return (
    <svg className="mt-[9px] ml-[18px] h-[88px] w-[66px]" viewBox="0 0 66 88">
      <defs>
        <linearGradient id="bin" x1="0" x2="1" y1="0" y2="0">
          <stop offset="0" stopColor="#c4c5c8" /><stop offset="0.350" stopColor="#e2e3e5" /><stop offset="0.750" stopColor="#d3d4d7" /><stop offset="1" stopColor="#b4b5b8" />
        </linearGradient>
      </defs>
      <ellipse cx="33" cy="14" rx="32" ry="9" fill="#8d8f92" />
      <path d="M4 16L12 4L18 9L24 1L30 8L38 1L44 10L52 4L60 14L50 22H12z" fill="#e8e9eb" stroke="#85878a" strokeWidth="0.800" />
      <path d="M14 12L20 17M24 6L28 15L34 12M40 6L42 16L50 12" stroke="#6c6e71" strokeWidth="2" />
      <path d="M22 12l5-2 4 5-5 3z" fill="#4db5d8" /><path d="M16 17l4-3 3 5z" fill="#3b3d52" /><path d="M42 15l6 1-3 4z" fill="#2f5f9c" /><path d="M50 15l3 4h-4z" fill="#b06840" />
      <path d="M1 14Q33 27 65 14L57 78Q55 86 33 86T9 78z" fill="url(#bin)" />
      <path d="M22 34L34 44L27 56M44 28L38 50L48 66M18 62L30 70" stroke="#f2f3f4" strokeWidth="5" fill="none" opacity="0.300" />
      <path d="M1 14Q33 27 65 14" fill="none" stroke="#f4f4f5" strokeWidth="1.500" />
    </svg>
  );
}

function Dock() {
  return (
    <div className="mt-1 ml-[82px] flex h-[122px] w-[2716px] rounded-[42px] border-2 border-[#747675] bg-[#545655] pl-[4px]">
      {dockApps.map((a) => <DockItem key={a.name} open={a.open} badge={a.badge}>{a.art}</DockItem>)}
      <div className="mt-[14px] mr-[20.5px] ml-[23px] h-[90px] w-[2px] bg-[#222322]" />
      {dockPinned.map((a) => <DockItem key={a.name} open>{a.art}</DockItem>)}
      <div className="mt-[14px] ml-[22px] h-[90px] w-[2px] bg-[#222322]" />
      <div className="ml-[21px]"><Trash /></div>
    </div>
  );
}

export default function App() {
  return (
    <div className="h-[1800px] w-[2880px] overflow-hidden bg-[#020303] font-[Inter]">
      <MenuBar />
      <div className="overflow-hidden rounded-[20px]">
        <TabStrip />
        <Toolbar />
        <Site />
      </div>
      <div className="ml-[735px] h-1 w-[1408px] rounded-b-full bg-[#414342]" />
      <Dock />
    </div>
  );
}
